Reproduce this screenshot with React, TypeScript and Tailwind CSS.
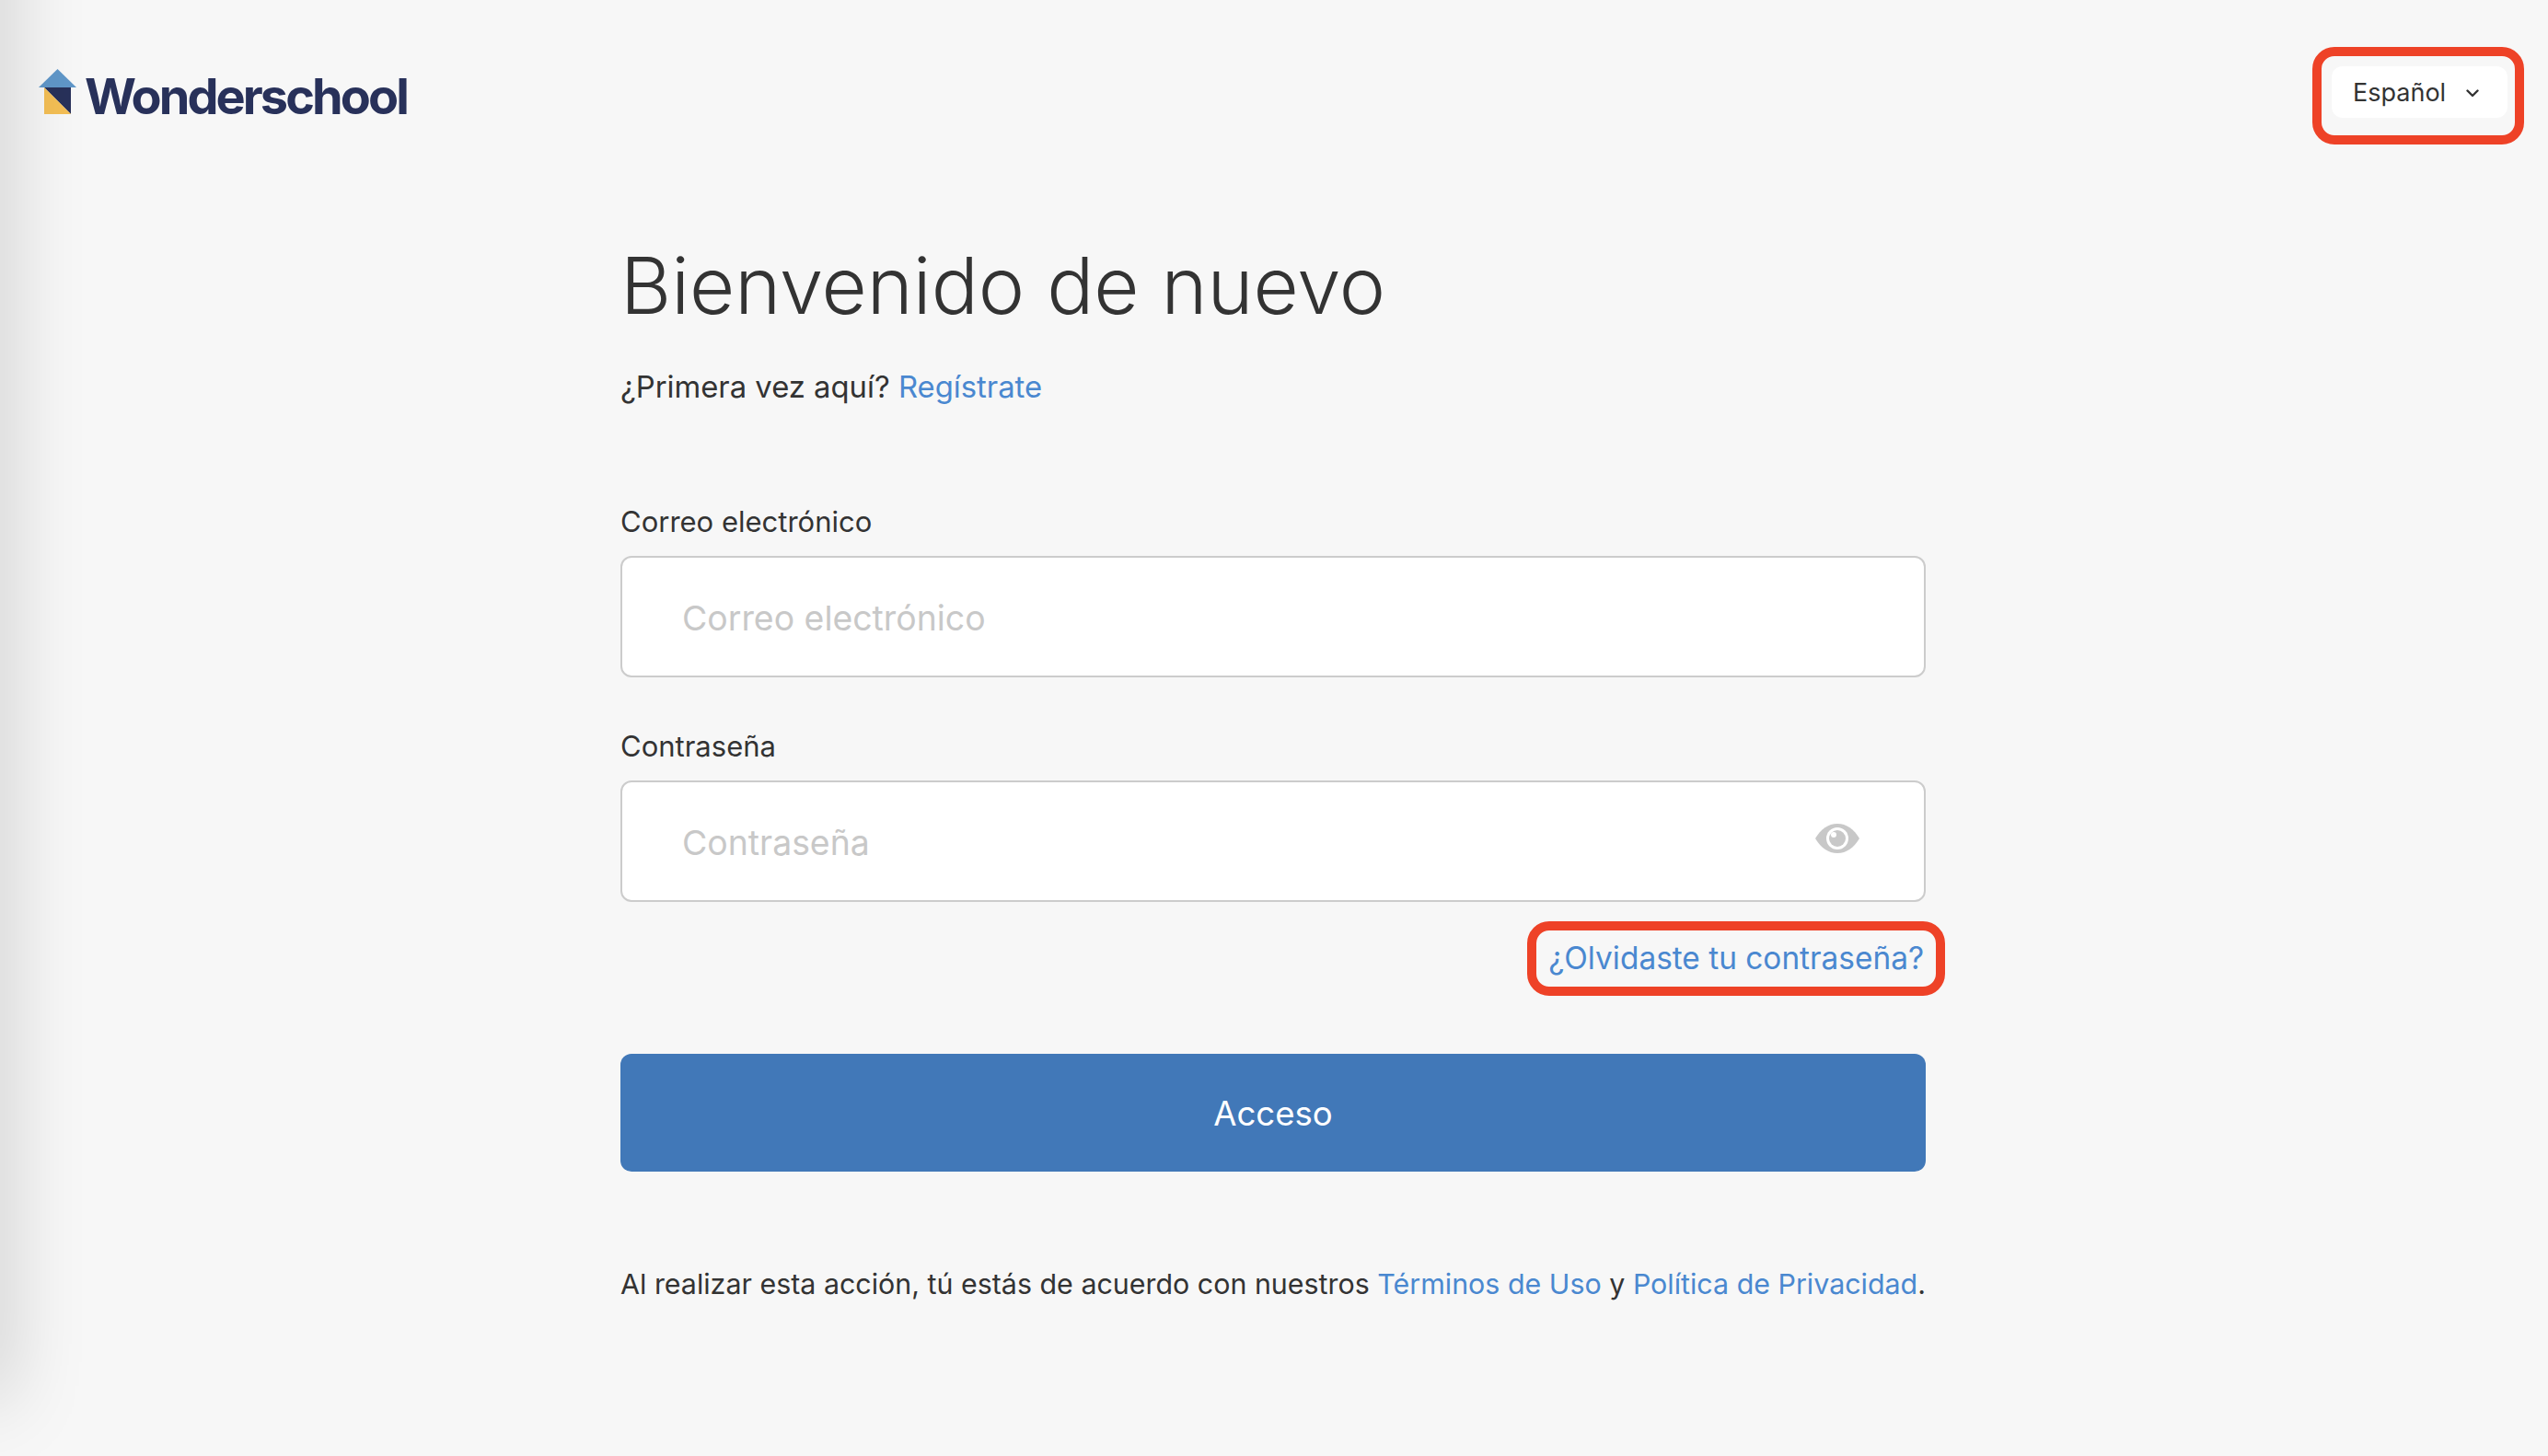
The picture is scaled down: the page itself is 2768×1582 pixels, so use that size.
export default function App() {
  return (
    <div className="relative h-[1582px] w-[2768px] overflow-hidden bg-[#f7f7f7] font-['Inter',sans-serif] text-[#333333]">
      <div className="absolute left-[-40px] top-[-120px] h-[1640px] w-[40px] shadow-[0_0_85px_rgba(0,0,0,0.26)]" />
      <header className="flex items-start justify-between pl-[42px] pr-[26px] pt-[51px]">
        <div className="mt-[24px] flex items-end gap-[9px]">
          <svg width="41" height="49" viewBox="0 0 41 49" className="block">
            <polygon points="20.5,0 41,20 0,20" fill="#6097c9" />
            <polygon points="6,20 35,20 35,49" fill="#28315a" />
            <polygon points="6,20 6,49 35,49" fill="#f4bf55" />
          </svg>
          <span className="text-[54px] leading-[39px] font-bold tracking-[-2.9px] text-[#28315a]">Wonderschool</span>
        </div>
        <div className="rounded-[24px] border-[10px] border-[#ee4227] pt-[11px] pr-[8px] pb-[19px] pl-[11px]">
          <button className="flex h-[56px] w-[191px] items-center gap-[22px] rounded-[12px] bg-white pt-[2px] pl-[23px] text-[27px] text-[#333333]">
            Español
            <svg width="14" height="9" viewBox="0 0 14 9" fill="none" stroke="#333333" strokeWidth="2.4" strokeLinecap="round" strokeLinejoin="round">
              <path d="M1.5 1.5 7 7l5.5-5.5" />
            </svg>
          </button>
        </div>
      </header>
      <main className="ml-[674px] w-[1418px]">
        <h1 className="mt-[104px] text-[85px] leading-[100px] font-light">Bienvenido de nuevo</h1>
        <p className="mt-[36px] text-[32.8px] leading-[46px]">
          ¿Primera vez aquí? <a className="text-[#4a88d0]">Regístrate</a>
        </p>
        <label className="mt-[102px] block text-[31px] leading-[44px]">Correo electrónico</label>
        <input
          placeholder="Correo electrónico"
          className="mt-[15px] block h-[132px] w-full rounded-[12px] border-2 border-[#cccccc] bg-white pt-[2px] pl-[65px] text-[37.4px] placeholder:text-[#c8c8c8]"
        />
        <label className="mt-[53px] block text-[31px] leading-[44px]">Contraseña</label>
        <div className="relative mt-[15px]">
          <input
            placeholder="Contraseña"
            className="block h-[132px] w-full rounded-[12px] border-2 border-[#cccccc] bg-white pt-[2px] pl-[65px] text-[37.4px] placeholder:text-[#c8c8c8]"
          />
          <svg width="48" height="32" viewBox="0 0 48 32" className="absolute right-[72px] top-[47px]">
            <path d="M0 16C6 6 14 0 24 0s18 6 24 16c-6 10-14 16-24 16S6 26 0 16Z" fill="#c8c8c8" />
            <circle cx="24" cy="16" r="12" fill="#ffffff" />
            <circle cx="24" cy="16" r="9" fill="#c8c8c8" />
            <circle cx="20" cy="12" r="3" fill="#ffffff" />
          </svg>
        </div>
        <div className="mt-[21px] -mr-[21px] flex justify-end">
          <a className="rounded-[24px] border-[10px] border-[#ee4227] px-[13px] py-[9px] text-[33.4px] leading-[43px] text-[#4a88d0]">
            ¿Olvidaste tu contraseña?
          </a>
        </div>
        <button className="mt-[63px] block h-[128px] w-full rounded-[12px] bg-[#4178b8] pt-[3px] text-[36.6px] text-white">Acceso</button>
        <p className="mt-[100px] text-[30.4px] leading-[44px] whitespace-nowrap">
          Al realizar esta acción, tú estás de acuerdo con nuestros <a className="text-[#4a88d0]">Términos de Uso</a> y{" "}
          <a className="text-[#4a88d0]">Política de Privacidad</a>.
        </p>
      </main>
    </div>
  );
}
